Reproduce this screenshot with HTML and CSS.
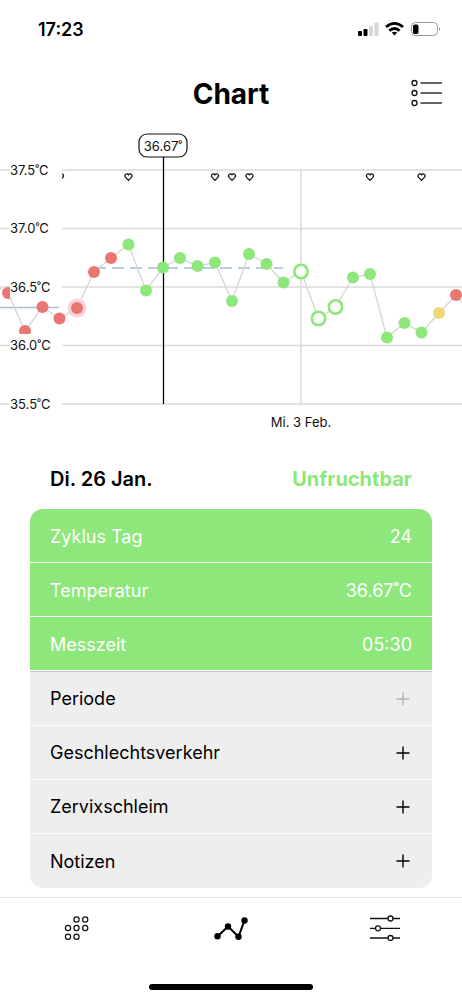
FILE: index.html
```html
<!DOCTYPE html>
<html lang="de">
<head>
<meta charset="utf-8">
<meta name="viewport" content="width=device-width, initial-scale=1">
<title>Chart</title>
<link rel="stylesheet" href="styles.css">
</head>
<body>
<div class="status">
  <span class="status-time">17:23</span>
  <svg class="status-icons" width="84" height="18" viewBox="357 20 84 18" aria-hidden="true">
    <g>
      <rect x="358" y="31" width="4" height="5" rx="1"/>
      <rect x="363.500" y="29" width="4" height="7" rx="1"/>
      <rect x="369" y="26" width="4" height="10" rx="1" fill="#d6d6d6"/>
      <rect x="374.500" y="22.500" width="4" height="13.500" rx="1" fill="#d6d6d6"/>
    </g>
    <g fill="none" stroke="#000" stroke-width="2.800">
      <path d="M386 27 Q394.500 19.800 403 27"/>
      <path d="M389.300 30.600 Q394.500 26.300 399.700 30.600"/>
    </g>
    <path d="M394.500 35.500 L391.700 32.500 Q394.500 30.800 397.300 32.500Z"/>
    <rect x="411.500" y="22.500" width="26" height="13" rx="4" fill="none" stroke="#999"/>
    <rect x="413" y="24.500" width="5.500" height="9.500" rx="1.800"/>
    <path d="M439 27 Q441 29 439 31Z" fill="#888"/>
  </svg>
</div>

<header class="header">
  <h1 class="title">Chart</h1>
  <button class="list-button" type="button" aria-label="Liste">
    <svg width="34" height="28" viewBox="410 79 34 28" fill="none" stroke="#111" stroke-width="1.300">
      <circle cx="414.500" cy="83" r="2.500"/><path d="M420.500 83H442"/>
      <circle cx="414.500" cy="93" r="2.500"/><path d="M420.500 93H442"/>
      <circle cx="414.500" cy="103" r="2.500"/><path d="M420.500 103H442"/>
    </svg>
  </button>
</header>

<main class="main">
  <svg class="chart" viewBox="0 128 462 310" role="img" aria-label="Temperaturkurve">
    <defs>
      <path id="heart" d="M0 3.800 L-2.900 .9 C-4.800 -1.300 -1.900 -4.200 0 -1.700 C1.900 -4.200 4.800 -1.300 2.900 .9Z"/>
    </defs>
    <path class="grid" d="M0 170H462M0 228.500H462M0 287H462M0 345.500H462M0 404H462M301 170V404"/>
    <path class="cover" d="M0 307.500H59"/>
    <path class="cover cover-dashed" d="M94 268H283"/>
    <polyline class="curve" points="0,288 8,293 25,331 42.500,307 59.500,318.500 77,308 94,272 111,258 128.500,244.500 146,290.500 163,267.500 180,258 197.500,266 215,262.500 232,301 249,254 266.500,264 283.500,282.500 301,271.500 318.500,318.500 335.500,307 353,277.500 370,274 387,337.500 404.500,323 421.500,332.500 439,313 456,295 462,303"/>
    <g class="red">
      <circle class="halo" cx="77" cy="308" r="9.500"/>
      <circle cx="8" cy="293" r="6"/><circle cx="25" cy="331" r="6"/><circle cx="42.500" cy="307" r="6"/>
      <circle cx="59.500" cy="318.500" r="6"/><circle cx="77" cy="308" r="6"/><circle cx="94" cy="272" r="6"/>
      <circle cx="111" cy="258" r="6"/><circle cx="456" cy="295" r="6"/>
    </g>
    <circle class="yellow" cx="439" cy="313" r="6"/>
    <path class="cursor" d="M163.500 157V404"/>
    <g class="green">
      <circle cx="128.500" cy="244.500" r="6"/><circle cx="146" cy="290.500" r="6"/><circle cx="163" cy="267.500" r="6"/>
      <circle cx="180" cy="258" r="6"/><circle cx="197.500" cy="266" r="6"/><circle cx="215" cy="262.500" r="6"/>
      <circle cx="232" cy="301" r="6"/><circle cx="249" cy="254" r="6"/><circle cx="266.500" cy="264" r="6"/>
      <circle cx="283.500" cy="282.500" r="6"/><circle cx="353" cy="277.500" r="6"/><circle cx="370" cy="274" r="6"/>
      <circle cx="387" cy="337.500" r="6"/><circle cx="404.500" cy="323" r="6"/><circle cx="421.500" cy="332.500" r="6"/>
    </g>
    <g class="open">
      <circle cx="301" cy="271.500" r="6.700"/><circle cx="318.500" cy="318.500" r="6.700"/><circle cx="335.500" cy="307" r="6.700"/>
    </g>
    <g class="hearts">
      <use href="#heart" x="60" y="176.500"/><use href="#heart" x="128.500" y="176.500"/><use href="#heart" x="215" y="176.500"/>
      <use href="#heart" x="232" y="176.500"/><use href="#heart" x="249.500" y="176.500"/><use href="#heart" x="370" y="176.500"/>
      <use href="#heart" x="421.500" y="176.500"/>
    </g>
    <g class="label-back">
      <rect x="10" y="159" width="52" height="22"/><rect x="10" y="217" width="52" height="22"/>
      <rect x="10" y="276" width="52" height="22"/><rect x="10" y="334" width="52" height="22"/>
      <rect x="10" y="393" width="52" height="22"/>
    </g>
    <g class="axis">
      <text x="10" y="175">37.5˚C</text>
      <text x="10" y="233">37.0˚C</text>
      <text x="10" y="292">36.5˚C</text>
      <text x="10" y="350">36.0˚C</text>
      <text x="10" y="409">35.5˚C</text>
      <text x="301" y="427" text-anchor="middle">Mi. 3 Feb.</text>
    </g>
    <rect class="bubble" x="139" y="134" width="48" height="23" rx="8"/>
    <text class="axis" x="163" y="151" text-anchor="middle">36.67˚</text>
  </svg>

  <section class="detail">
    <div class="detail-head">
      <h2 class="date">Di. 26 Jan.</h2>
      <span class="fertility">Unfruchtbar</span>
    </div>
    <div class="card">
      <dl class="facts">
        <div class="row fact"><dt>Zyklus Tag</dt><dd>24</dd></div>
        <div class="row fact"><dt>Temperatur</dt><dd>36.67˚C</dd></div>
        <div class="row fact"><dt>Messzeit</dt><dd>05:30</dd></div>
      </dl>
      <button class="row entry entry-muted" type="button">Periode
        <svg class="plus" width="14" height="14" viewBox="0 0 14 14" aria-hidden="true"><path d="M0.500 7H13.500M7 0.500V13.500"/></svg></button>
      <button class="row entry" type="button">Geschlechtsverkehr
        <svg class="plus" width="14" height="14" viewBox="0 0 14 14" aria-hidden="true"><path d="M0.500 7H13.500M7 0.500V13.500"/></svg></button>
      <button class="row entry" type="button">Zervixschleim
        <svg class="plus" width="14" height="14" viewBox="0 0 14 14" aria-hidden="true"><path d="M0.500 7H13.500M7 0.500V13.500"/></svg></button>
      <button class="row entry" type="button">Notizen
        <svg class="plus" width="14" height="14" viewBox="0 0 14 14" aria-hidden="true"><path d="M0.500 7H13.500M7 0.500V13.500"/></svg></button>
    </div>
  </section>
</main>

<footer class="footer">
  <nav class="tabs">
    <button class="tab" type="button" aria-label="Kalender">
      <svg width="26" height="26" viewBox="65 915 26 26" fill="none" stroke="#111" stroke-width="1.200">
        <circle cx="77.500" cy="919.500" r="2.600"/><circle cx="86.200" cy="919.500" r="2.600"/>
        <circle cx="69" cy="928" r="2.600"/><circle cx="77.500" cy="928" r="2.600"/><circle cx="86.200" cy="928" r="2.600"/>
        <circle cx="69" cy="936.700" r="2.600"/><circle cx="77.500" cy="936.700" r="2.600"/>
      </svg>
    </button>
    <button class="tab" type="button" aria-label="Chart" aria-current="page">
      <svg width="36" height="26" viewBox="213.500 915 36 26">
        <path d="M218 936.500 L228.500 926.500 L239 936.700 L245 920.500" fill="none" stroke="#000" stroke-width="2"/>
        <circle cx="218" cy="936.300" r="3.200"/><circle cx="228.500" cy="926.500" r="3.200"/>
        <circle cx="239" cy="936.700" r="3.200"/><circle cx="245" cy="920.500" r="3.200"/>
      </svg>
    </button>
    <button class="tab" type="button" aria-label="Einstellungen">
      <svg width="32" height="26" viewBox="369.500 915 32 26" fill="#fff" stroke="#111" stroke-width="1.300">
        <path d="M370.500 918.500H400.500M370.500 928.300H400.500M370.500 938H400.500"/>
        <circle cx="391" cy="918.500" r="2.500"/><circle cx="378.500" cy="928.300" r="2.500"/><circle cx="391" cy="938" r="2.500"/>
      </svg>
    </button>
  </nav>
  <div class="home-bar"></div>
</footer>
</body>
</html>
```
FILE: styles.css
```css
* { box-sizing: border-box; }

body {
  margin: 0;
  min-height: 100vh;
  display: flex;
  flex-direction: column;
  background: #fff;
  color: #000;
  font-family: Inter, "Liberation Sans", sans-serif;
  font-size: 18px;
}

button {
  margin: 0;
  padding: 0;
  border: 0;
  background: none;
  color: inherit;
  font: inherit;
  cursor: pointer;
}

svg { display: block; }

.status {
  display: flex;
  align-items: center;
  justify-content: space-between;
  height: 58px;
  padding: 0 21px 0 38px;
}

.status-time { font-weight: 600; }

.header {
  display: grid;
  grid-template-columns: 1fr auto 1fr;
  align-items: center;
  height: 70px;
  padding: 0 18px;
}

.title {
  grid-column: 2;
  margin: 0;
  padding-top: 2px;
  font-size: 28px;
  font-weight: 700;
}

.list-button { justify-self: end; }

.chart {
  width: 100%;
  height: auto;
}

.grid { stroke: #dadada; stroke-width: 1.5; fill: none; }
.curve { stroke: #d6d4d6; stroke-width: 1.3; fill: none; }
.cover { stroke: #a5bfd8; stroke-width: 1.3; fill: none; }
.cover-dashed { stroke-dasharray: 12 6; }
.cursor { stroke: #000; stroke-width: 1.3; }
.red { fill: #ea7672; }
.halo { fill: #fbd3d6; }
.yellow { fill: #f0d678; }
.green { fill: #8ee77a; }
.open { fill: #fff; stroke: #8ee77a; stroke-width: 2.6; }
.hearts { fill: none; stroke: #111; stroke-width: 1.2; }
.label-back { fill: #fff; }
.axis { font-size: 13px; fill: #111; }
.bubble { fill: #fff; stroke: #111; stroke-width: 1.2; }

.detail { padding: 0 30px; }

.detail-head {
  display: flex;
  align-items: center;
  justify-content: space-between;
  height: 71px;
  padding: 10px 20px 0;
  font-size: 20px;
  font-weight: 600;
}

.date {
  margin: 0;
  font-size: 20px;
  font-weight: 600;
}

.fertility {
  color: #8ee77a;
  font-weight: 700;
}

.card {
  overflow: hidden;
  border-radius: 13px;
  background: #eee;
}

.facts {
  margin: 0;
  background: #8ee77a;
  color: #fff;
  border-bottom: 1px solid #c8c8c8;
}

.row {
  display: flex;
  align-items: center;
  justify-content: space-between;
  width: 100%;
  height: 54px;
  padding: 0 20px;
  border-bottom: 1px solid #fff;
}

.fact { padding-top: 2px; }
.row dd { margin: 0; }

.entry { text-align: left; }
.entry:last-child { border-bottom: 0; }

.plus {
  margin-right: 2px;
  stroke: #000;
  stroke-width: 1.4;
}

.entry-muted .plus { stroke: #b5b5b5; }

.footer {
  display: flex;
  flex-direction: column;
  align-items: center;
  justify-content: space-between;
  height: 103px;
  margin-top: auto;
  padding: 17px 0 10px;
  border-top: 1px solid #e2e2e2;
}

.tabs {
  display: grid;
  grid-template-columns: repeat(3, 1fr);
  width: 100%;
}

.tab {
  display: flex;
  justify-content: center;
}

.home-bar {
  width: 164px;
  height: 6px;
  border-radius: 3px;
  background: #000;
}
```
